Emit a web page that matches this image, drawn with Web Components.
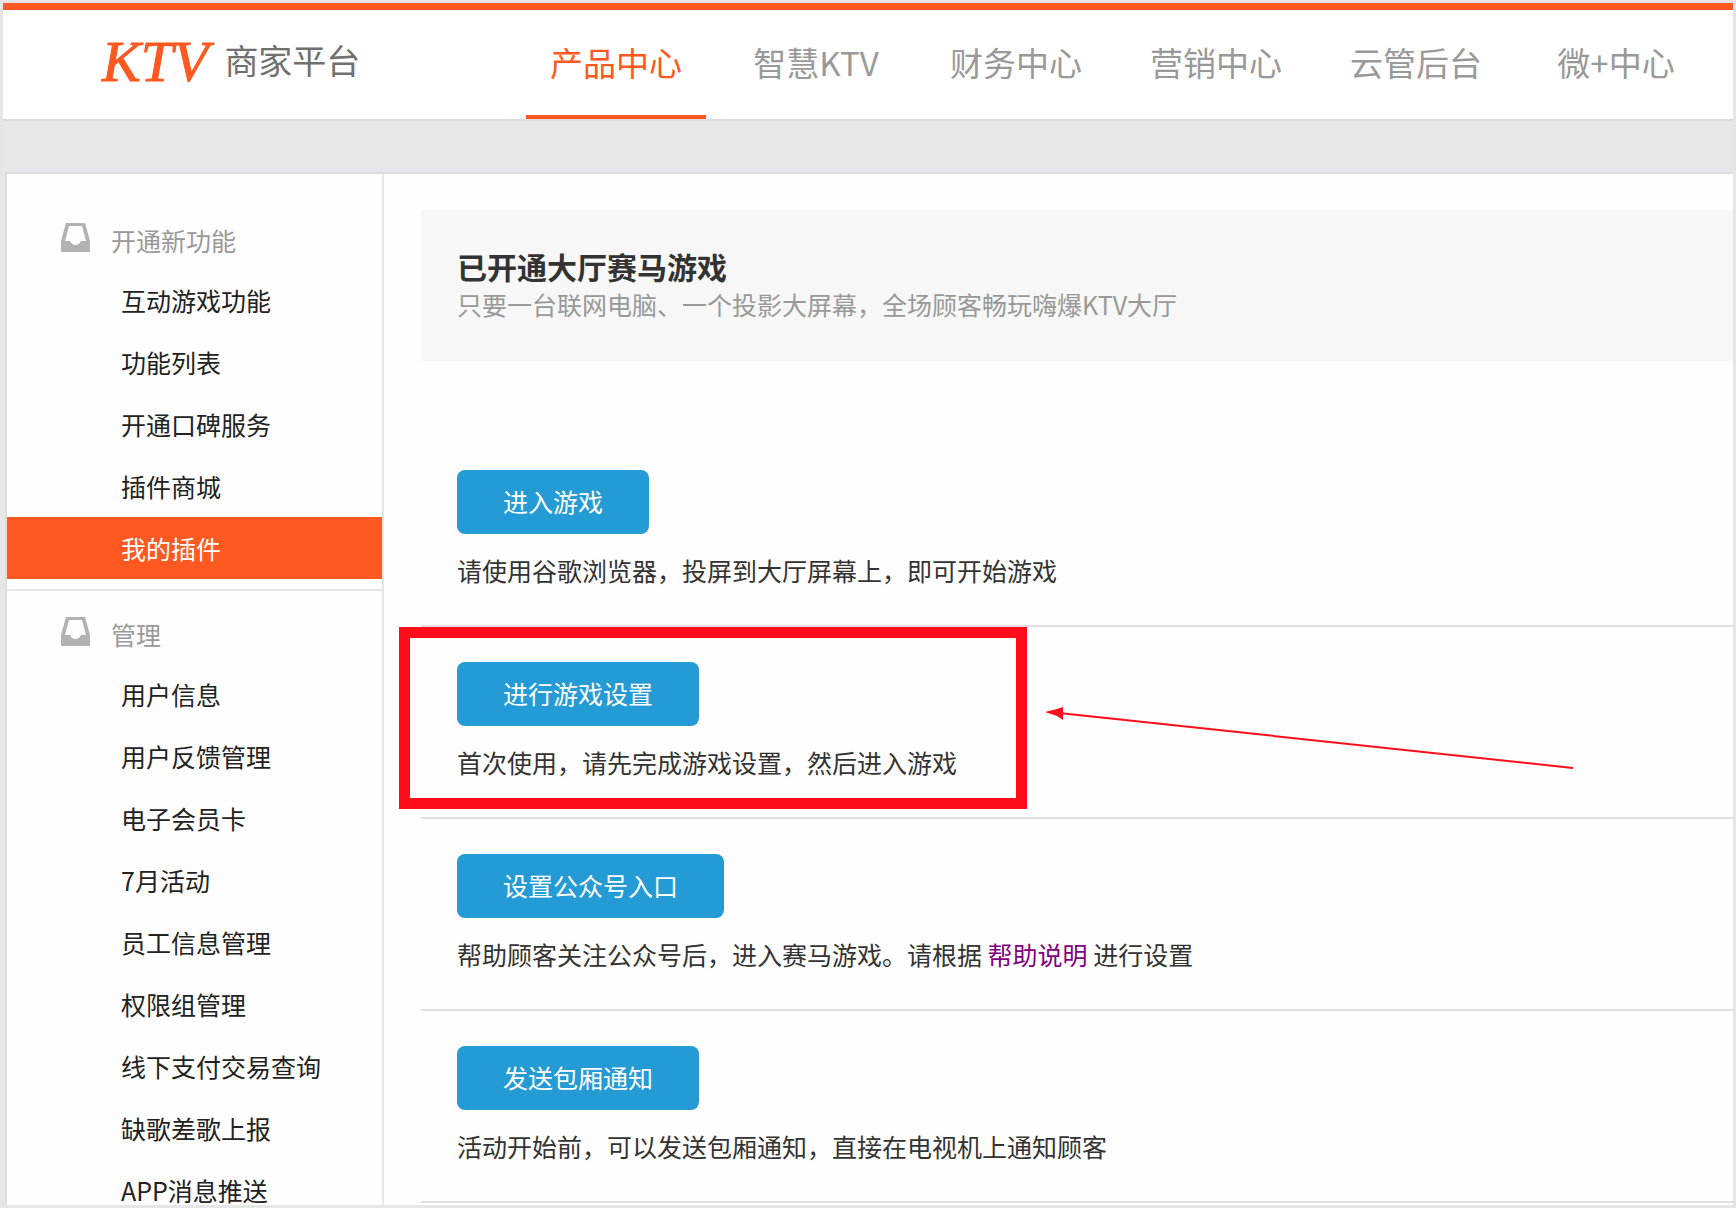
<!DOCTYPE html>
<html lang="zh-CN">
<head>
<meta charset="utf-8">
<title>KTV 商家平台</title>
<style>
  html, body { margin: 0; height: 100%; }
  body { font-family: "Noto Sans CJK SC", sans-serif; font-size: 25px; color: #333; background: #e6e6e6; }
</style>
</head>
<body>
<ktv-app>
  <ktv-header slot="header">
    <ktv-tab active>产品中心</ktv-tab>
    <ktv-tab>智慧KTV</ktv-tab>
    <ktv-tab>财务中心</ktv-tab>
    <ktv-tab>营销中心</ktv-tab>
    <ktv-tab>云管后台</ktv-tab>
    <ktv-tab>微+中心</ktv-tab>
  </ktv-header>
  <side-group slot="side" heading="开通新功能">
    <side-item>互动游戏功能</side-item>
    <side-item>功能列表</side-item>
    <side-item>开通口碑服务</side-item>
    <side-item>插件商城</side-item>
    <side-item active>我的插件</side-item>
  </side-group>
  <side-group slot="side" heading="管理">
    <side-item>用户信息</side-item>
    <side-item>用户反馈管理</side-item>
    <side-item>电子会员卡</side-item>
    <side-item>7月活动</side-item>
    <side-item>员工信息管理</side-item>
    <side-item>权限组管理</side-item>
    <side-item>线下支付交易查询</side-item>
    <side-item>缺歌差歌上报</side-item>
    <side-item>APP消息推送</side-item>
  </side-group>
  <plugin-banner>
    <span slot="title">已开通大厅赛马游戏</span>
    只要一台联网电脑、一个投影大屏幕，全场顾客畅玩嗨爆KTV大厅
  </plugin-banner>
  <action-row label="进入游戏">请使用谷歌浏览器，投屏到大厅屏幕上，即可开始游戏</action-row>
  <action-row label="进行游戏设置">首次使用，请先完成游戏设置，然后进入游戏<guide-mark slot="mark"></guide-mark></action-row>
  <action-row label="设置公众号入口">帮助顾客关注公众号后，进入赛马游戏。请根据 <help-link>帮助说明</help-link> 进行设置</action-row>
  <action-row label="发送包厢通知">活动开始前，可以发送包厢通知，直接在电视机上通知顾客</action-row>
</ktv-app>

<script>
const define = (name, html, setup) => {
  const tpl = document.createElement('template');
  tpl.innerHTML = html;
  customElements.define(name, class extends HTMLElement {
    constructor() {
      super();
      this.attachShadow({ mode: 'open' }).append(tpl.content.cloneNode(true));
    }
    connectedCallback() { if (setup) setup(this, this.shadowRoot); }
  });
};

define('ktv-app', `
  <style>
    :host { display: flex; flex-direction: column; box-sizing: border-box; height: 100vh; border: 3px solid #e6e6e6;
      background: #e6e7eb; overflow-y: auto; scrollbar-width: none; }
    .body { display: flex; flex: 1 0 auto; margin: 51px 0 0 2px; border: 2px solid #dcdce1; border-width: 2px 0 0 2px; background: #fefefe; }
    aside { flex: 0 0 375px; padding-top: 33px; border-right: 2px solid #e6e6eb; }
    main { flex: 1; min-width: 0; padding: 36px 0 0 37px; }
  </style>
  <slot name="header"></slot>
  <div class="body"><aside><slot name="side"></slot></aside><main><slot></slot></main></div>
`);

define('ktv-header', `
  <style>
    :host { display: block; flex: none; background: #fff; border-top: 7px solid #ff5820; border-bottom: 2px solid #dcdce0; }
    header { display: flex; align-items: stretch; justify-content: space-between; height: 109px; padding: 0 27px 0 99px; }
    .logo { display: flex; align-items: center; gap: 16px; padding-bottom: 10px; color: #707070; font-size: 34px;
      line-height: 48px; text-decoration: none; white-space: nowrap; }
    .logo b { padding-top: 4px; font: italic 400 58px/48px "Liberation Serif", serif; color: #ff5820; -webkit-text-stroke: 1px #ff5820; }
    nav { display: flex; gap: 20px; }
  </style>
  <header><a class="logo" href="#"><b>KTV</b><span>商家平台</span></a><nav><slot></slot></nav></header>
`);

define('ktv-tab', `
  <style>
    :host { display: flex; flex: 0 0 180px; }
    a { flex: 1; display: flex; align-items: center; justify-content: center; padding-bottom: 2px; border-bottom: 4px solid transparent;
      color: #999; font-size: 33px; line-height: 48px; text-decoration: none; white-space: nowrap; }
    :host([active]) a { color: #ff5820; border-color: #ff5820; }
  </style>
  <a href="#"><slot></slot></a>
`);

define('side-group', `
  <style>
    :host { display: block; padding-bottom: 10px; }
    :host(:not(:first-of-type)) { border-top: 2px solid #e6e6eb; padding-top: 10px; }
    h2 { display: flex; align-items: center; gap: 21px; height: 62px; margin: 0; padding-left: 54px; color: #999; font-size: 25px; font-weight: 400; }
    h2 span { padding-top: 3px; }
    svg { flex: none; width: 29px; height: 29px; margin-bottom: 2px; }
  </style>
  <h2><svg viewBox="0 0 29 29" aria-hidden="true"><path fill="#b2b2b2" fill-rule="evenodd" d="M5 0H24L29 18V29H0V18ZM8 3L4 18H9Q11 22 14.500 22Q18 22 20 18H25L21 3Z"/></svg><span></span></h2>
  <nav><slot></slot></nav>
`, (el, root) => { root.querySelector('span').textContent = el.getAttribute('heading'); });

define('side-item', `
  <style>
    :host { display: block; }
    a { display: block; padding-left: 114px; color: #222; line-height: 62px; text-decoration: none; white-space: nowrap; }
    :host([active]) a { background: #ff5820; color: #fff; }
  </style>
  <a href="#"><slot></slot></a>
`);

define('plugin-banner', `
  <style>
    :host { display: block; margin-bottom: 74px; padding: 37px 36px 39px; background: #f7f7f7; color: #999; }
    h1 { margin: 0; color: #333; font-size: 30px; font-weight: 700; line-height: 39px; }
    p { margin: 0; line-height: 36px; }
  </style>
  <h1><slot name="title"></slot></h1><p><slot></slot></p>
`);

define('action-row', `
  <style>
    :host { display: block; position: relative; padding: 35px 36px 37px; border-bottom: 2px solid #e1e1e1; }
    button { display: block; height: 64px; padding: 0 46px 2px; border: 0; border-radius: 8px; background: #259bd5; color: #fff;
      font: inherit; cursor: pointer; }
    p { margin: 18px 0 0; line-height: 36px; }
  </style>
  <button type="button"></button><p><slot></slot></p><slot name="mark"></slot>
`, (el, root) => { root.querySelector('button').textContent = el.getAttribute('label'); });

define('help-link', `
  <style>a { color: #800080; text-decoration: none; }</style>
  <a href="#"><slot></slot></a>
`);

/* Red frame and arrow laid over the row that the guide points at. */
define('guide-mark', `
  <style>
    :host { position: absolute; left: -22px; top: 0; display: flex; gap: 18px; pointer-events: none; }
    .frame { box-sizing: border-box; width: 628px; height: 182px; border: 11px solid #ff0d1b; }
    svg { width: 530px; height: 182px; }
  </style>
  <div class="frame"></div>
  <svg viewBox="0 0 530 182" aria-hidden="true"><path d="M14 86L528 141" stroke="#ff0d1b" stroke-width="2"/><path d="M0 85L12 82L18 80V93L12 89Z" fill="#ff0d1b"/></svg>
`);
</script>
</body>
</html>
